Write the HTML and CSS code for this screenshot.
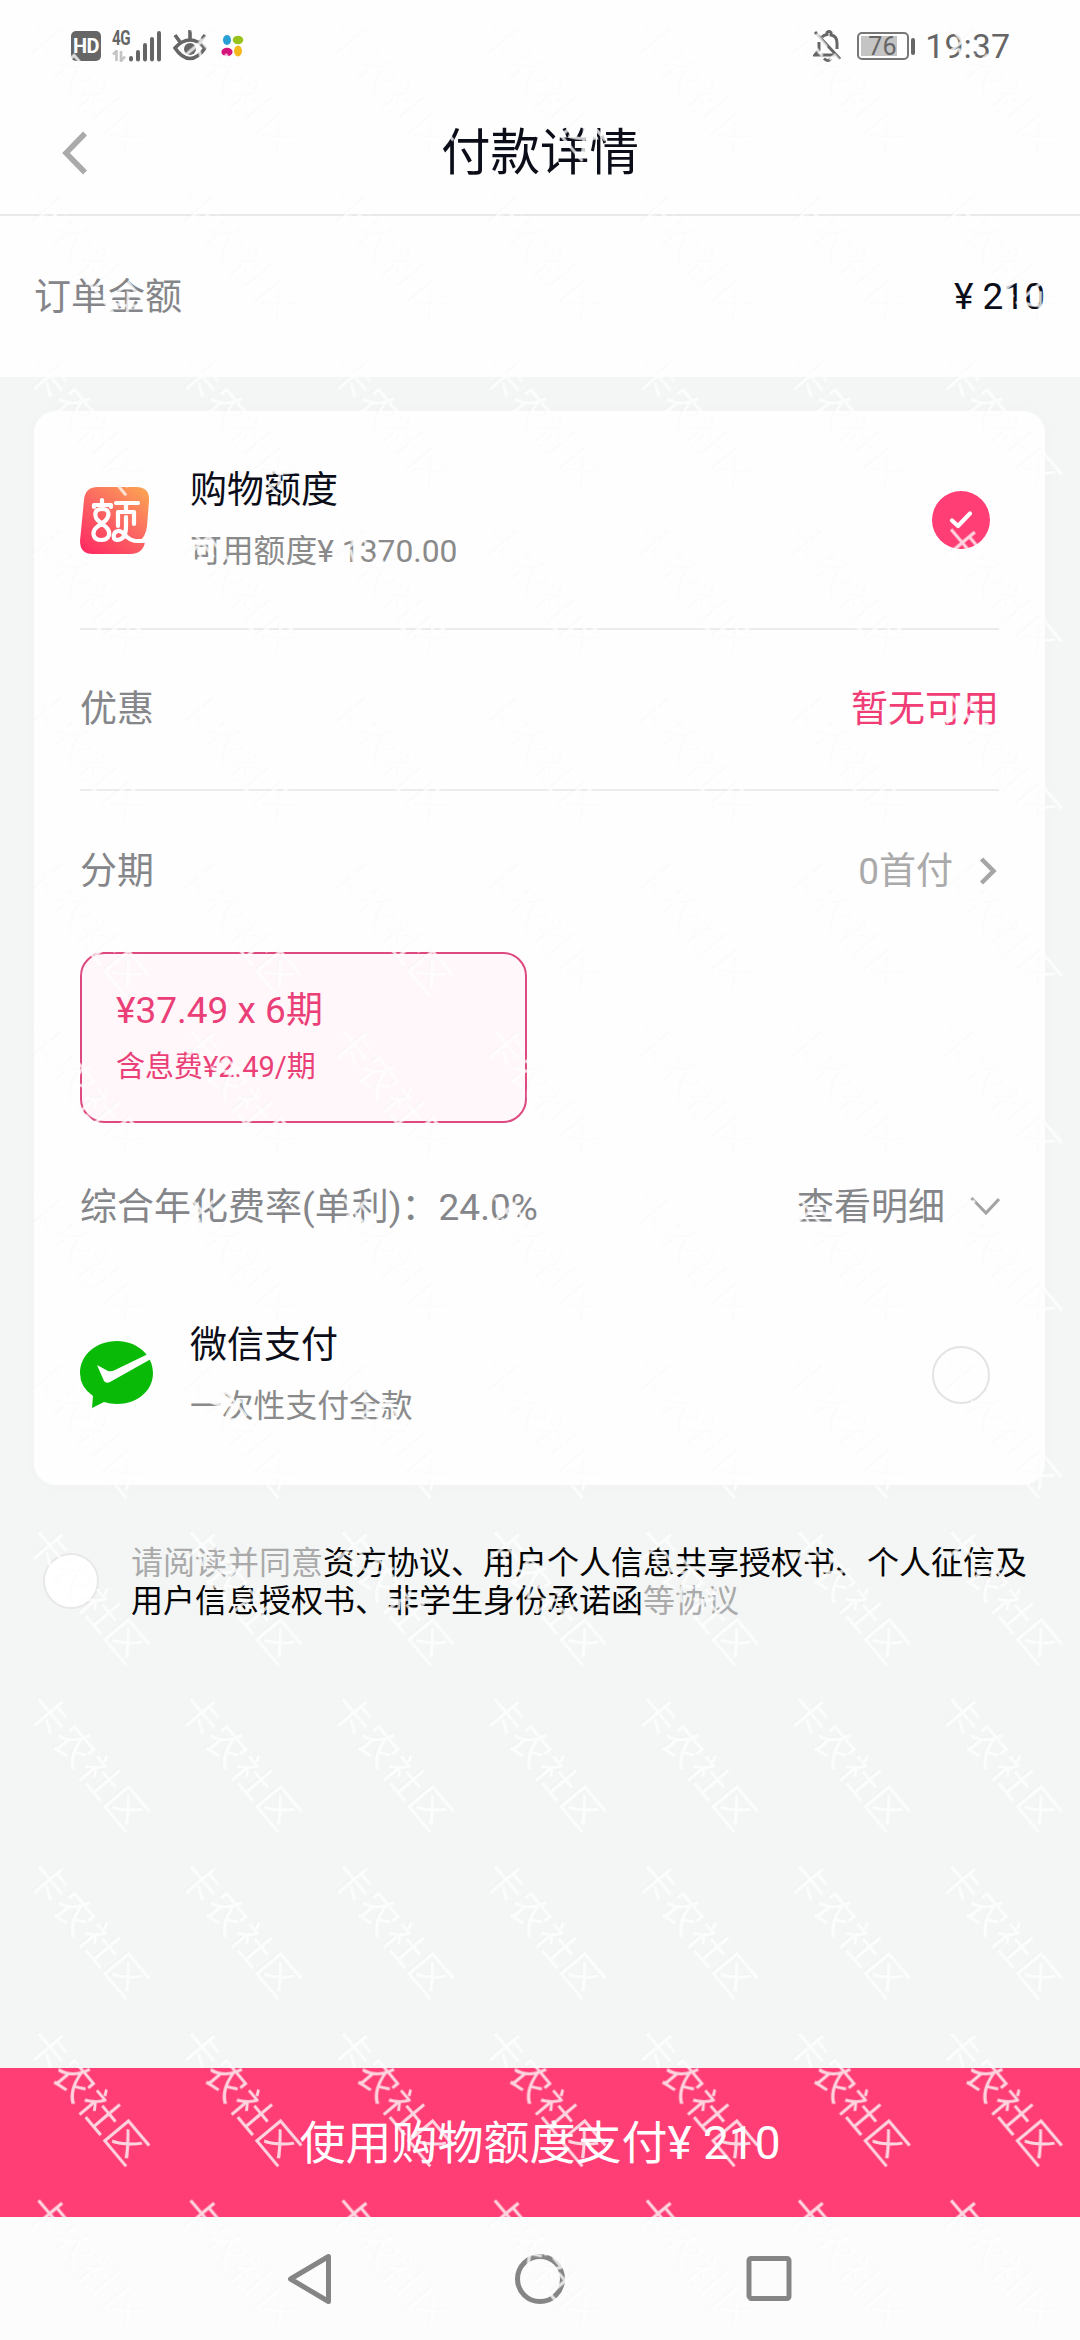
FILE: index.html
```html
<!DOCTYPE html>
<html lang="zh-CN">
<head>
<meta charset="utf-8">
<title>付款详情</title>
<link rel="stylesheet" href="styles.css">
</head>
<body>
<div class="page">
  <header class="status">
    <div class="status-left">
      <span class="hd">HD</span>
      <span class="net"><b>4G</b>
        <svg width="14" height="12" viewBox="0 0 14 12" fill="none" stroke="#c4c4c4" stroke-width="2.6"><path d="M1 4.5 4.5 1V11M9 1V11L13 6.5"/></svg>
      </span>
      <svg class="bars" width="33" height="31" viewBox="0 0 33 31" stroke="#666" stroke-width="4" stroke-linecap="round"><path d="M2 27v1.500M9 21v7.500M16 14v14.500M23 8v20.500M30 2v26.500"/></svg>
      <svg class="eye" width="34" height="32" viewBox="0 0 34 32" fill="none" stroke="#666" stroke-width="3.6"><path d="M2 18Q9 10 17 10T32 18Q25 28.500 17 28.500T2 18Z"/><path d="M17 0v9M2 5l5 7M32 5l-5 7"/><circle cx="17" cy="19" r="6" fill="#666" stroke="none"/></svg>
      <svg class="petals" width="23" height="22" viewBox="0 0 23 22"><ellipse cx="6" cy="5" rx="4" ry="5" fill="#2a9fd6"/><ellipse cx="17" cy="5" rx="5.3" ry="4.2" fill="#98c31d"/><ellipse cx="6" cy="17" rx="5.6" ry="4.2" fill="#d4147a"/><ellipse cx="17" cy="16" rx="4" ry="5.4" fill="#f6b91c"/></svg>
    </div>
    <div class="status-right">
      <svg width="30" height="32" viewBox="0 0 30 32" fill="none" stroke="#666" stroke-width="3"><path d="M6 12v8l-4 5h20M9 7q2-2 5-2.500V2.500q2-2 4 0V5q6 1 6 8v6M2 2l25 27"/><path d="M11 28.500q4 4 7 0"/></svg>
      <span class="battery"><span class="cell"><span>76</span></span><i></i></span>
      <span class="clock">19:37</span>
    </div>
  </header>

  <div class="titlebar">
    <svg class="back" width="28" height="44" viewBox="0 0 28 44" fill="none" stroke="#aaa" stroke-width="5.500"><path d="M24 2.500 5 22 24 41.500"/></svg>
    <h1>付款详情</h1>
  </div>

  <section class="order">
    <span class="label">订单金额</span>
    <span class="amount">¥ 210</span>
  </section>

  <main class="content">
    <section class="card">
      <div class="method line first">
        <svg class="logo" width="73" height="69" viewBox="0 0 73 69">
          <defs><linearGradient id="quota" x1="0.100" y1="1" x2="0.900" y2="0"><stop offset="0" stop-color="#ff2a62"/><stop offset="0.550" stop-color="#fb6a62"/><stop offset="1" stop-color="#fba253"/></linearGradient></defs>
          <path d="M18 1H56Q70 1 69 15L67 40Q66 51 58 56H65Q63 68 50 68H13Q0 68 0 55L4 14Q5 1 18 1Z" fill="url(#quota)"/>
          <g fill="none" stroke="#fff" stroke-width="4.200" stroke-linecap="round" stroke-linejoin="round"><path d="M22 14v4M14 21v-2h17v2M22 23C13 23 14 32 20 36L26 41C32 47 29 54 21 54S11 46 17 41L25 35C30 30 30 23 22 23M36 17H58M46 18v6M38 40V26H54V38M46 31V40C46 50 43 54 37 54 32 53 33 46 38 45 44 44 46 55 56 55H64"/></g>
        </svg>
        <div class="method-text"><p>购物额度</p><small>可用额度¥ 1370.00</small></div>
        <span class="radio on"><svg width="24" height="20" viewBox="0 0 24 20" fill="none" stroke="#fff" stroke-width="4.200" stroke-linecap="round" stroke-linejoin="round"><path d="M3 10.500 9 16 21 3.500"/></svg></span>
      </div>
      <div class="row line"><span class="label">优惠</span><span class="pink">暂无可用</span></div>
      <div class="row">
        <span class="label">分期</span>
        <span class="hint">0首付<svg class="chev-r" width="18" height="28" viewBox="0 0 18 28" fill="none" stroke="#a6a6a6" stroke-width="4.500"><path d="M2.500 2 14.500 14 2.500 26"/></svg></span>
      </div>
      <div class="plan"><p>¥37.49 x 6期</p><small>含息费¥2.49/期</small></div>
      <div class="row rate">
        <span class="label">综合年化费率(单利)：24.0%</span>
        <span class="label more">查看明细<svg class="chev-d" width="30" height="20" viewBox="0 0 30 20" fill="none" stroke="#a3a3a3" stroke-width="3"><path d="M1.500 2 16 17 29 3"/></svg></span>
      </div>
      <div class="method wechat">
        <svg class="logo" width="73" height="67" viewBox="0 0 73 67">
          <path d="M37 0C57 0 73 14 73 32S57 63 37 63Q30 63 24 61L12 67 13 55Q0 46 0 32C0 14 16 0 37 0Z" fill="#09bb07"/>
          <path d="M17 24 28 30Q31 31 35 29L67 13.500 71 18 30 41Q26 43 24 40Z" fill="#fff"/>
        </svg>
        <div class="method-text"><p>微信支付</p><small>一次性支付全款</small></div>
        <span class="radio"></span>
      </div>
    </section>

    <div class="agree">
      <span class="agree-box"></span>
      <p><span>请阅读并同意</span>资方协议、用户个人信息共享授权书、个人征信及用户信息授权书、非学生身份承诺函<span>等协议</span></p>
    </div>
  </main>

  <button class="pay">使用购物额度支付¥ 210</button>

  <nav class="nav">
    <svg width="52" height="56" viewBox="0 0 52 56"><path d="M43.500 5.500V50.500L5.500 28Z"/></svg>
    <svg width="52" height="56" viewBox="0 0 52 56"><circle cx="26" cy="28" r="22.500"/></svg>
    <svg width="52" height="56" viewBox="0 0 52 56"><rect x="6" y="7.500" width="40" height="40" rx="2"/></svg>
  </nav>

  <svg class="watermark" width="1080" height="2340" aria-hidden="true">
    <defs>
      <pattern id="mark" x="11.500" y="8.500" width="152.100" height="167.100" patternUnits="userSpaceOnUse">
        <text class="mark-edge" transform="translate(74 81.500) rotate(50)" y="14" text-anchor="middle">卡农社区</text>
        <text class="mark-text" transform="translate(75 82.500) rotate(50)" y="14" text-anchor="middle">卡农社区</text>
      </pattern>
    </defs>
    <rect width="1080" height="2340" fill="url(#mark)"/>
  </svg>
</div>
</body>
</html>
```

FILE: styles.css
```css
* { box-sizing: border-box; }
body, h1, p { margin: 0; }
body {
  width: 1080px;
  background: #f4f6f6;
  font-family: Roboto, "Noto Sans CJK SC", sans-serif;
  font-size: 37px;
  color: #0b0d18;
}
svg { display: block; flex: none; }
.page {
  position: relative;
  display: flex;
  flex-direction: column;
  height: 2340px;
  overflow: hidden;
}
.status {
  display: flex;
  justify-content: space-between;
  height: 92px;
  padding: 0 70px 0 71px;
  background: #fefefe;
  color: #666;
}
.status-left, .status-right { display: flex; align-items: center; }
.hd {
  width: 30px;
  height: 30px;
  border-radius: 5px;
  background: #666;
  color: #fff;
  font-size: 20px;
  font-weight: 700;
  line-height: 31px;
  text-align: center;
  letter-spacing: -0.500px;
}
.net {
  display: flex;
  flex-direction: column;
  justify-content: space-between;
  width: 18px;
  height: 32px;
  margin-left: 11px;
  font-size: 21px;
  line-height: 16px;
}
.net b { letter-spacing: -0.500px; transform: scaleX(0.720); transform-origin: left; }
.bars { margin-left: -1px; }
.eye { margin-left: 11px; }
.petals { margin-left: 14px; }
.battery { display: flex; align-items: center; margin-left: 14px; gap: 2px; }
.cell {
  display: flex;
  width: 52px;
  height: 28px;
  padding: 2px;
  border: 2px solid #777;
  border-radius: 5px;
}
.cell span {
  width: 36px;
  padding-left: 7px;
  background: #c4c4c4;
  font-size: 25px;
  line-height: 21px;
}
.battery i { width: 4px; height: 17px; border-radius: 2px; background: #666; }
.clock { margin-left: 10px; font-size: 34px; }

.titlebar {
  display: grid;
  grid-template-columns: 1fr auto 1fr;
  align-items: center;
  height: 124px;
  padding: 0 61px;
  background: #fefefe;
  border-bottom: 2px solid #e9e9e9;
}
.titlebar h1 { font-size: 49.500px; font-weight: 400; line-height: 60px; }
.order {
  display: flex;
  align-items: center;
  justify-content: space-between;
  height: 161px;
  padding: 0 35px 0 34px;
  background: #fefefe;
}
.order .label { padding-bottom: 5px; }
.label { color: #85868a; }
.content { flex: 1; padding: 34px 35px 0 34px; }
.card {
  padding: 0 46px 25px;
  border-radius: 22px;
  background: #fefefe;
  box-shadow: 0 0 20px rgba(0, 0, 0, 0.015);
}
.line { border-bottom: 2px solid #ececec; }
.method { display: flex; align-items: center; height: 169px; }
.method.first { height: 219px; padding-top: 1px; }
.method.first .method-text { padding-top: 2px; }
.method.wechat { padding-bottom: 2px; }
.method.wechat .method-text { padding-top: 2px; }
.method-text { flex: 1; padding-left: 37px; line-height: 61px; }
.method-text small { display: block; font-size: 31.800px; color: #8a8a8a; }
.radio {
  display: grid;
  place-items: center;
  width: 58px;
  height: 58px;
  margin-right: 9px;
  border: 2px solid #e4e4e4;
  border-radius: 50%;
}
.radio.on { border: 0; background: #ff3e75; }
.row {
  display: flex;
  align-items: center;
  justify-content: space-between;
  height: 161px;
  padding-bottom: 7px;
}
.pink { color: #f03d76; }
.hint, .more { display: flex; align-items: center; }
.hint { color: #aaa; }
.chev-r { margin: 5px 2px 0 26px; }
.chev-d { margin: 4px -1px 0 25px; }
.plan {
  width: 447px;
  height: 171px;
  padding: 29px 34px;
  border: 2px solid #dd4a80;
  border-radius: 24px;
  background: #fff7fa;
  color: #ea3f77;
  line-height: 56px;
}
.plan small { display: block; font-size: 29px; }
.rate { height: 168px; }
.agree { display: flex; align-items: center; margin-top: 59px; padding-left: 9px; }
.agree-box {
  flex: none;
  width: 56px;
  height: 56px;
  margin-bottom: 3px;
  border: 2px solid #e8e8e8;
  border-radius: 50%;
  background: #fff;
}
.agree p {
  width: 900px;
  margin-left: 32px;
  font-size: 32px;
  line-height: 38px;
  color: #050505;
}
.agree span { color: #aaa; }
.pay {
  height: 149px;
  border: 0;
  padding: 0 0 8px;
  background: #ff3e75;
  color: #fff;
  font: inherit;
  font-size: 46px;
}
.nav {
  display: flex;
  justify-content: center;
  align-items: center;
  gap: 177px;
  height: 123px;
  background: #fcfcfc;
}
.nav svg { fill: none; stroke: #858585; stroke-width: 5; stroke-linejoin: round; }
.watermark { position: absolute; inset: 0; pointer-events: none; }
.mark-text, .mark-edge { font: 400 40.500px "Noto Sans CJK SC", sans-serif; }
.mark-text { fill: rgba(255, 255, 255, 0.780); }
.mark-edge { fill: rgba(0, 0, 0, 0.015); }
```
